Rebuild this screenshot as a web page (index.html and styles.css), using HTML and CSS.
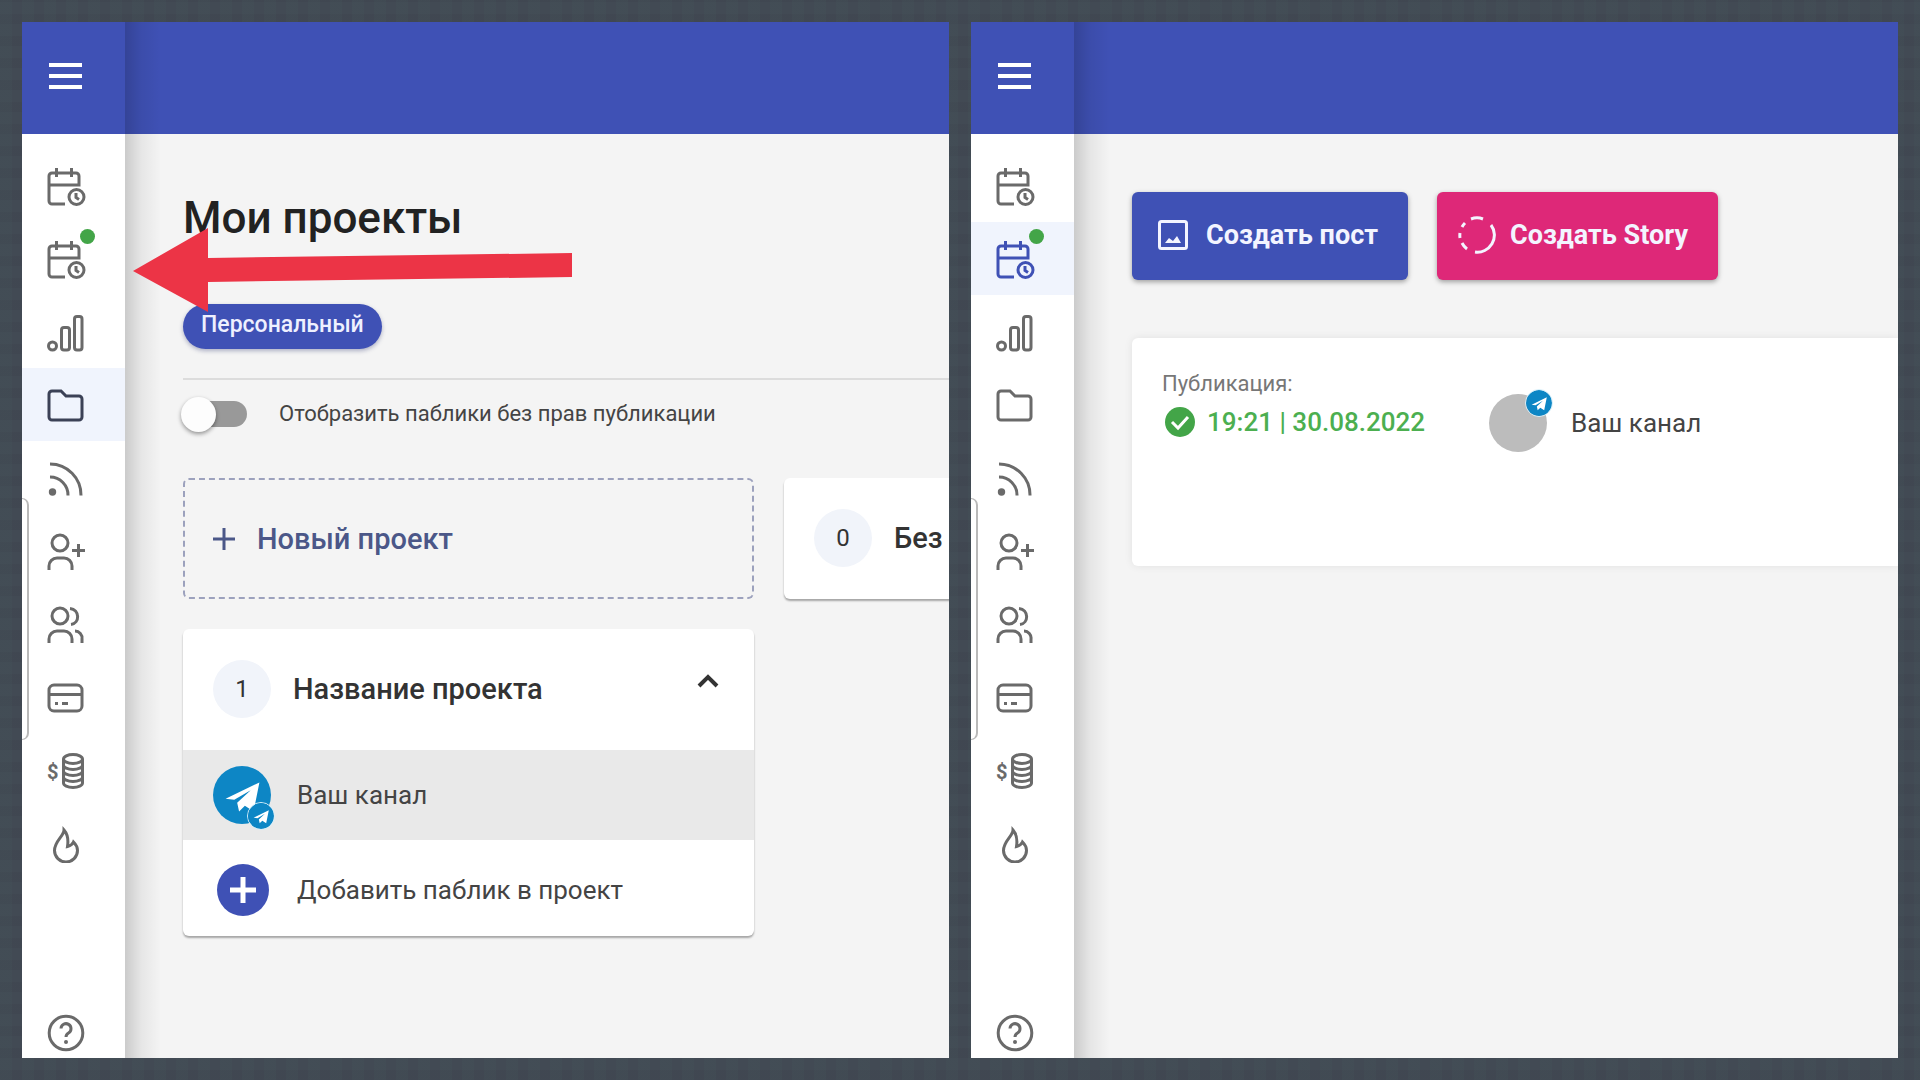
FILE: index.html
```html
<!DOCTYPE html>
<html lang="ru">
<head>
<meta charset="utf-8">
<meta name="viewport" content="width=device-width, initial-scale=1">
<title>Мои проекты</title>
<link rel="stylesheet" href="styles.css">
</head>
<body>
<svg class="sprite" aria-hidden="true">
  <symbol id="i-menu" viewBox="0 0 40 40"><path d="M3 9h33M3 20h33M3 31h33" stroke-width="4"/></symbol>
  <symbol id="i-calendar" viewBox="0 0 40 40"><path d="M19 38H6a3 3 0 0 1-3-3V10a3 3 0 0 1 3-3h24a3 3 0 0 1 3 3v9H3M10.500 2v9M25.500 2v9"/><circle cx="30.500" cy="31" r="7.500"/><path d="M30 27v4.500l3 2"/></symbol>
  <symbol id="i-chart" viewBox="0 0 40 40"><circle cx="6.500" cy="34" r="4"/><rect x="15.500" y="15.500" width="8" height="22.500" rx="2.500"/><rect x="28.500" y="4.500" width="7.500" height="33.500" rx="2.500"/></symbol>
  <symbol id="i-folder" viewBox="0 0 40 40"><path d="M3 9a3 3 0 0 1 3-3h9l5 5h13a3 3 0 0 1 3 3v18a3 3 0 0 1-3 3H6a3 3 0 0 1-3-3z"/></symbol>
  <symbol id="i-rss" viewBox="0 0 40 40"><circle class="fill" cx="6.500" cy="34" r="3.700"/><path d="M4 19a18 18 0 0 1 18 18.500M4 6a31 31 0 0 1 31 31.500"/></symbol>
  <symbol id="i-user-add" viewBox="0 0 40 40"><circle cx="14" cy="12" r="8"/><path d="M3 39v-4a8 8 0 0 1 8-8h7a8 8 0 0 1 8 8v4M32.500 13v13M26 19.500h13"/></symbol>
  <symbol id="i-users" viewBox="0 0 40 40"><circle cx="14" cy="12" r="8"/><path d="M3 39v-4a8 8 0 0 1 8-8h7a8 8 0 0 1 8 8v4M24 4.500c10 1 10 15 1 16M29 27a7 7 0 0 1 7 8v4"/></symbol>
  <symbol id="i-card" viewBox="0 0 40 40"><rect x="3" y="8" width="33" height="26" rx="5"/><path d="M3 17.500h33M9 26.500h3M16 26.500h6"/></symbol>
  <symbol id="i-coins" viewBox="0 0 40 40"><ellipse cx="27" cy="9" rx="9.500" ry="4.500"/><path d="M17.500 9v24c0 2.500 4.200 4.500 9.500 4.500s9.500-2 9.500-4.500V9M17.500 15c0 2.500 4.200 4.500 9.500 4.500s9.500-2 9.500-4.500M17.500 21c0 2.500 4.200 4.500 9.500 4.500s9.500-2 9.500-4.500M17.500 27c0 2.500 4.200 4.500 9.500 4.500s9.500-2 9.500-4.500"/><text x="1" y="29" class="coin-sign">$</text></symbol>
  <symbol id="i-flame" viewBox="0 0 40 40"><path d="M18 7c0 6-9.500 11-9.500 20.500a11.500 11.500 0 0 0 23 0c0-3.500-1.500-6-4-8.500-1 2.500-2.500 3.500-6 4.500C22.500 17 21.500 11 18 7z"/></symbol>
  <symbol id="i-help" viewBox="0 0 40 40"><circle cx="20" cy="20" r="16.800"/><path d="M15 15.500a5 5 0 1 1 7.500 4.500c-1.700 1-2.500 2-2.500 4"/><circle class="fill" cx="20" cy="29" r="2"/></symbol>
  <symbol id="i-telegram" viewBox="0 0 60 60"><circle cx="30" cy="30" r="30" fill="#0d86c5" stroke="none"/><path d="M13 34 48 17 42 47 33 41 27 47 25 38 39 25 22 35z" fill="#fff" stroke="none"/></symbol>
</svg>

<main class="board">
  <section class="app" aria-label="Мои проекты">
    <aside class="side">
      <button class="menu" type="button" aria-label="Меню"><svg class="icon"><use href="#i-menu"/></svg></button>
      <nav class="nav">
        <a href="#" aria-label="Календарь"><svg class="icon"><use href="#i-calendar"/></svg></a>
        <a href="#" aria-label="Публикации"><svg class="icon"><use href="#i-calendar"/></svg><span class="dot"></span></a>
        <a href="#" aria-label="Статистика"><svg class="icon"><use href="#i-chart"/></svg></a>
        <a href="#" aria-label="Проекты" class="active dark"><svg class="icon"><use href="#i-folder"/></svg></a>
        <a href="#" aria-label="Лента"><svg class="icon"><use href="#i-rss"/></svg></a>
        <a href="#" aria-label="Пригласить"><svg class="icon"><use href="#i-user-add"/></svg></a>
        <a href="#" aria-label="Команда"><svg class="icon"><use href="#i-users"/></svg></a>
        <a href="#" aria-label="Оплата"><svg class="icon"><use href="#i-card"/></svg></a>
        <a href="#" aria-label="Партнёрам"><svg class="icon"><use href="#i-coins"/></svg></a>
        <a href="#" aria-label="Новости"><svg class="icon"><use href="#i-flame"/></svg></a>
        <a href="#" aria-label="Помощь" class="help"><svg class="icon"><use href="#i-help"/></svg></a>
      </nav>
      <span class="handle"></span>
    </aside>
    <div class="main">
      <header class="topbar"></header>
      <div class="content projects">
        <h1>Мои проекты</h1>
        <div class="filters"><button class="chip" type="button">Персональный</button></div>
        <label class="switch"><input type="checkbox"><span>Отобразить паблики без прав публикации</span></label>
        <div class="cards">
          <button class="new" type="button"><svg class="plus" viewBox="0 0 22 22"><path d="M11 0v22M0 11h22"/></svg>Новый проект</button>
          <article class="card"><div class="card-head"><span class="count">0</span><h2>Без</h2></div></article>
          <article class="card">
            <div class="card-head"><span class="count">1</span><h2>Название проекта</h2>
              <button class="fold" type="button" aria-label="Свернуть"><svg viewBox="0 0 24 16"><path d="M3 13l9-9 9 9"/></svg></button></div>
            <a class="row selected" href="#"><span class="avatar"><svg class="face"><use href="#i-telegram"/></svg><svg class="mini low"><use href="#i-telegram"/></svg></span>Ваш канал</a>
            <a class="row add" href="#"><span class="avatar"><svg class="add-icon" viewBox="0 0 52 52"><circle cx="26" cy="26" r="26"/><path d="M26 13v26M13 26h26"/></svg></span>Добавить паблик в проект</a>
          </article>
        </div>
      </div>
    </div>
    <svg class="arrow" viewBox="0 0 440 84" aria-hidden="true"><path d="M0 43 75 0V30L439 25V49L75 54V84z"/></svg>
  </section>

  <section class="app" aria-label="Публикации">
    <aside class="side">
      <button class="menu" type="button" aria-label="Меню"><svg class="icon"><use href="#i-menu"/></svg></button>
      <nav class="nav">
        <a href="#" aria-label="Календарь"><svg class="icon"><use href="#i-calendar"/></svg></a>
        <a href="#" aria-label="Публикации" class="active"><svg class="icon"><use href="#i-calendar"/></svg><span class="dot"></span></a>
        <a href="#" aria-label="Статистика"><svg class="icon"><use href="#i-chart"/></svg></a>
        <a href="#" aria-label="Проекты"><svg class="icon"><use href="#i-folder"/></svg></a>
        <a href="#" aria-label="Лента"><svg class="icon"><use href="#i-rss"/></svg></a>
        <a href="#" aria-label="Пригласить"><svg class="icon"><use href="#i-user-add"/></svg></a>
        <a href="#" aria-label="Команда"><svg class="icon"><use href="#i-users"/></svg></a>
        <a href="#" aria-label="Оплата"><svg class="icon"><use href="#i-card"/></svg></a>
        <a href="#" aria-label="Партнёрам"><svg class="icon"><use href="#i-coins"/></svg></a>
        <a href="#" aria-label="Новости"><svg class="icon"><use href="#i-flame"/></svg></a>
        <a href="#" aria-label="Помощь" class="help"><svg class="icon"><use href="#i-help"/></svg></a>
      </nav>
      <span class="handle"></span>
    </aside>
    <div class="main">
      <header class="topbar"></header>
      <div class="content posts">
        <div class="actions">
          <button class="action" type="button"><svg class="icon-post" viewBox="0 0 30 30"><rect x="1.500" y="1.500" width="27" height="27" rx="2"/><path class="solid" d="M7 23l4-5 4 3 4-5 4 7z"/></svg>Создать пост</button>
          <button class="action story" type="button"><svg class="icon-story" viewBox="0 0 38 38"><path d="M33 9A17 17 0 0 1 17 36M13 3a17 17 0 0 1 12 0M7 7a17 17 0 0 0-3 4M2 17a17 17 0 0 0 0 5M4 27a17 17 0 0 0 5 6"/></svg>Создать Story</button>
        </div>
        <article class="post">
          <div>
            <p class="caption">Публикация:</p>
            <p class="date"><svg viewBox="0 0 30 30"><circle cx="15" cy="15" r="15"/><path d="M7 15l6 6L23 10"/></svg>19:21 | 30.08.2022</p>
          </div>
          <div class="channel"><span class="avatar grey"><svg class="mini high"><use href="#i-telegram"/></svg></span>Ваш канал</div>
        </article>
      </div>
    </div>
  </section>
</main>
</body>
</html>
```
FILE: styles.css
```css
:root {
  --blue: #3f51b5;
  --ink: #6a6a6a;
}

* { box-sizing: border-box; }

body {
  margin: 0;
  font: 400 24px/32px Roboto, "Noto Sans", sans-serif;
  color: #444;
  background:
    repeating-linear-gradient(90deg, rgba(70, 92, 94, .16) 0 12px, transparent 12px 22px),
    repeating-linear-gradient(0deg, rgba(56, 58, 70, .18) 0 10px, transparent 10px 22px),
    #424a54;
}

button { font: inherit; color: inherit; border: 0; background: none; padding: 0; cursor: pointer; }
a { color: inherit; text-decoration: none; }
h1, h2, p { margin: 0; }
svg { display: block; fill: none; stroke: currentColor; flex: none; }
.sprite { display: none; }

.board {
  display: grid;
  grid-template-columns: minmax(0, 1fr) minmax(0, 1fr);
  gap: 22px;
  padding: 22px;
  min-height: 100vh;
}

.app {
  position: relative;
  display: flex;
  overflow: hidden;
  background: #f4f4f4;
}

/* Sidebar */
.side {
  position: relative;
  z-index: 1;
  display: flex;
  flex-direction: column;
  flex: none;
  width: 103px;
  background: #fff;
}

.side::after {
  content: "";
  position: absolute;
  top: 0;
  bottom: 0;
  left: 100%;
  width: 36px;
  background: linear-gradient(90deg, rgba(0, 0, 0, .17), rgba(0, 0, 0, .06) 45%, transparent);
}

.menu {
  display: flex;
  align-items: center;
  height: 112px;
  padding: 0 0 5px 24px;
  color: #fff;
  background: var(--blue);
}

.icon { width: 40px; height: 40px; stroke-width: 3; overflow: visible; }
.fill { fill: currentColor; stroke: none; }
.coin-sign { font: 700 20px Roboto, sans-serif; fill: currentColor; stroke: none; }

.nav {
  display: flex;
  flex-direction: column;
  flex: 1;
  padding: 15px 0 5px;
  color: var(--ink);
}

.nav a {
  position: relative;
  display: flex;
  align-items: center;
  height: 73px;
  padding-left: 24px;
}

.nav .active { background: #f0f4fd; color: var(--blue); }
.nav .dark { color: #3b4156; }
.nav .help { height: 40px; margin-top: auto; }

.dot {
  position: absolute;
  top: 7px;
  left: 58px;
  width: 15px;
  height: 15px;
  border-radius: 50%;
  background: #43a548;
}

.handle {
  position: absolute;
  top: 476px;
  left: 0;
  width: 7px;
  height: 242px;
  border: solid #b9b9b9;
  border-width: 1px 2px 1px 0;
  border-radius: 0 8px 8px 0;
}

/* Main area */
.main { flex: 1; min-width: 0; }
.topbar { height: 112px; background: var(--blue); }
.content { padding-left: 58px; }

h1 {
  padding-top: 56px;
  font-size: 44px;
  line-height: 56px;
  font-weight: 500;
  color: #222;
}

.filters {
  padding: 58px 0 29px;
  border-bottom: 2px solid #dcdcdc;
}

.chip {
  display: block;
  height: 45px;
  padding: 0 18px 4px;
  border-radius: 23px;
  color: #eef0ff;
  background: var(--blue);
  font-size: 23px;
  font-weight: 500;
  box-shadow: 0 2px 4px rgba(40, 50, 110, .35);
}

.switch {
  display: flex;
  align-items: center;
  gap: 32px;
  padding: 18px 0;
  font-size: 22px;
}

.switch input {
  position: relative;
  appearance: none;
  width: 52px;
  height: 26px;
  margin: 0 0 0 12px;
  border-radius: 13px;
  background: #999;
}

.switch input::before {
  content: "";
  position: absolute;
  left: -14px;
  top: -4px;
  width: 35px;
  height: 35px;
  border-radius: 50%;
  background: #fdfdfd;
  box-shadow: 0 2px 4px rgba(0, 0, 0, .4);
}

.cards {
  display: grid;
  grid-template-columns: 571px 571px;
  gap: 30px;
  padding-top: 30px;
}

.new {
  display: flex;
  align-items: center;
  gap: 22px;
  padding: 0 28px;
  border: 2px dashed #9ca1bd;
  border-radius: 6px;
  color: #4b5788;
  font-size: 29px;
  font-weight: 500;
}

.plus { width: 22px; height: 22px; stroke-width: 3; }

.card {
  border-radius: 6px;
  background: #fff;
  box-shadow: 0 2px 2px rgba(0, 0, 0, .32);
}

.card-head {
  display: flex;
  align-items: center;
  gap: 22px;
  height: 121px;
  padding: 0 34px 2px 30px;
}

.count {
  width: 58px;
  height: 58px;
  border-radius: 50%;
  background: #f1f4fa;
  line-height: 58px;
  text-align: center;
  color: #333;
}

h2 { font-size: 29px; font-weight: 500; color: #333; }
.fold { margin-left: auto; padding-bottom: 16px; }
.fold svg { width: 24px; height: 16px; stroke-width: 4; stroke: #333; }

.row {
  display: flex;
  align-items: center;
  gap: 26px;
  height: 90px;
  padding-left: 30px;
  font-size: 26px;
}

.selected { background: #e9e9e9; }
.add { height: 96px; padding-top: 3px; }

.avatar { position: relative; flex: none; width: 58px; height: 58px; border-radius: 50%; }
.face { width: 58px; height: 58px; }
.mini { position: absolute; width: 28px; height: 28px; border-radius: 50%; border: 1px solid #d5effa; }
.low { right: -4px; bottom: -6px; }
.high { right: -6px; top: -5px; }
.grey { background: #bcbcbc; }
.add-icon { width: 52px; height: 52px; margin: 3px 4px; }
.add-icon circle { fill: var(--blue); stroke: none; }
.add-icon path { stroke: #fff; stroke-width: 5; }

.arrow {
  position: absolute;
  z-index: 2;
  left: 111px;
  top: 206px;
  width: 440px;
  height: 84px;
  fill: #ec3446;
  stroke: none;
}

/* Posts */
.posts { padding-top: 58px; }
.actions { display: flex; gap: 29px; }

.action {
  display: flex;
  align-items: center;
  gap: 18px;
  height: 88px;
  padding: 0 30px 2px 26px;
  border-radius: 6px;
  color: #f3f4ff;
  background: var(--blue);
  font-size: 27px;
  font-weight: 700;
  box-shadow: 0 2px 5px rgba(0, 0, 0, .35);
}

.story { background: #de2878; gap: 14px; padding-left: 21px; }
.icon-post { width: 30px; height: 30px; stroke-width: 3; }
.solid { fill: currentColor; stroke: none; }
.icon-story { width: 38px; height: 38px; stroke-width: 3; }

.post {
  display: flex;
  gap: 64px;
  height: 228px;
  margin-top: 58px;
  padding: 30px;
  border-radius: 6px 0 0 6px;
  background: #fff;
  box-shadow: 0 0 8px rgba(0, 0, 0, .08);
}

.caption { font-size: 22px; color: #777; }

.date {
  display: flex;
  align-items: center;
  gap: 12px;
  padding: 6px 0 0 3px;
  font-size: 26px;
  font-weight: 500;
  color: #4caf50;
}

.date svg { width: 30px; height: 30px; fill: #43a548; stroke: none; }
.date path { fill: none; stroke: #fff; stroke-width: 3; }

.channel {
  display: flex;
  align-items: center;
  align-self: flex-start;
  gap: 24px;
  padding-top: 26px;
  font-size: 26px;
}
```
